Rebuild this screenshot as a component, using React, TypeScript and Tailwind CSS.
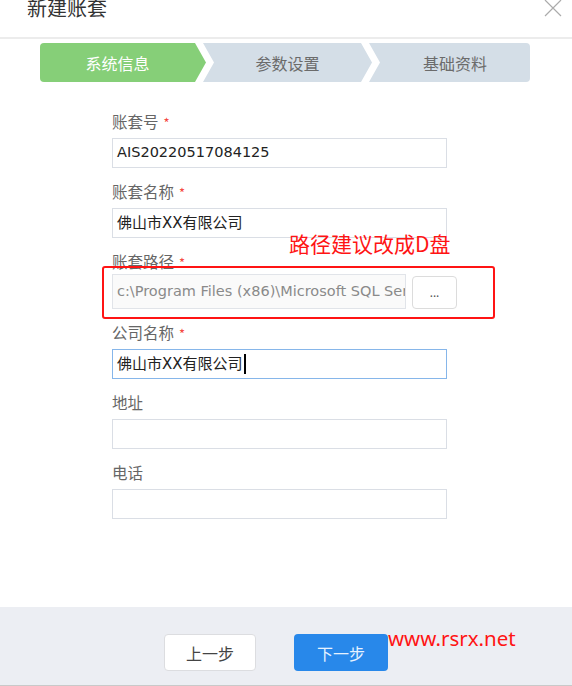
import React from "react";

const cjk = "font-['Noto_Sans_CJK_SC',sans-serif]";
const inputFont = "font-['DejaVu_Sans','Noto_Sans_CJK_SC',sans-serif]";

type FieldProps = {
  label: string;
  required?: boolean;
  children: React.ReactNode;
  gap?: string;
};

const Field: React.FC<FieldProps> = ({ label, required, children, gap = "mt-[7px]" }) => (
  <div className="mb-[13px]">
    <div className={`h-[20px] leading-[20px] text-[15.5px] text-[#666] ${cjk}`}>
      {label}
      {required && <span className="ml-[5px] text-[13px] text-[#f5473e]">*</span>}
    </div>
    <div className={gap}>{children}</div>
  </div>
);

const TextBox: React.FC<{ value?: string; focused?: boolean; big?: boolean }> = ({ value, focused, big }) => (
  <div
    className={`flex h-[30px] w-[335px] items-center border-[1.5px] bg-white px-[4px] text-[#222] ${inputFont} ${
      big ? "text-[15px]" : "text-[14.5px]"
    } ${focused ? "border-[#86b6ea]" : "border-[#dadee5]"}`}
  >
    {value}
    {focused && <span className="ml-[1px] inline-block h-[20px] w-[2px] bg-black" />}
  </div>
);

const steps = [
  { name: "系统信息", active: true },
  { name: "参数设置", active: false },
  { name: "基础资料", active: false },
];

export default function App() {
  return (
    <div className="relative flex h-[686px] w-[572px] flex-col overflow-hidden bg-white">
      {/* header */}
      <div className="flex h-[39px] items-start justify-between border-b-2 border-[#ececec] pl-[27px] pr-[10px]">
        <div className={`-mt-[2px] h-[20px] leading-[20px] text-[20px] text-[#333] ${cjk}`}>新建账套</div>
        <svg width="18" height="18" viewBox="0 0 18 18" className="-mt-[1px]">
          <path d="M1 1 L17 17 M17 1 L1 17" stroke="#ababab" strokeWidth="1.2" />
        </svg>
      </div>

      {/* steps */}
      <div className={`ml-[40px] mt-[4px] flex h-[39px] w-[490px] text-[16px] ${cjk}`}>
        <div className="flex w-[166px] items-center justify-center rounded-l-[4px] bg-[#86cf78] pr-[11px] text-white [clip-path:polygon(0_0,calc(100%-11px)_0,100%_50%,calc(100%-11px)_100%,0_100%)]">
          {steps[0].name}
        </div>
        <div className="-ml-[3px] flex w-[169px] items-center justify-center bg-[#d4dee7] text-[#6b6b6b] [clip-path:polygon(0_0,calc(100%-11px)_0,100%_50%,calc(100%-11px)_100%,0_100%,11px_50%)]">
          {steps[1].name}
        </div>
        <div className="-ml-[3px] flex flex-1 items-center justify-center rounded-r-[4px] bg-[#d4dee7] pl-[11px] text-[#6b6b6b] [clip-path:polygon(0_0,100%_0,100%_100%,0_100%,11px_50%)]">
          {steps[2].name}
        </div>
      </div>

      {/* form */}
      <div className="ml-[112px] mt-[29px] w-[345px]">
        <Field label="账套号" required>
          <TextBox value="AIS20220517084125" />
        </Field>
        <Field label="账套名称" required>
          <TextBox value="佛山市XX有限公司" big />
        </Field>
        <Field label="账套路径" required gap="mt-[3px]">
          <div className="flex items-end gap-[6px]">
            <div
              className={`h-[35px] w-[294px] overflow-hidden whitespace-nowrap border-[1.5px] border-[#e1e4e9] bg-[#fafafa] px-[4px] leading-[32px] text-[14.5px] text-[#8a8a8a] ${inputFont}`}
            >
              c:\Program Files (x86)\Microsoft SQL Server\MSSQL
            </div>
            <button className="h-[33px] w-[45px] rounded-[4px] border-[1.5px] border-[#dcdcdc] bg-white text-[12px] leading-[20px] text-[#555]">
              ...
            </button>
          </div>
        </Field>
        <Field label="公司名称" required>
          <TextBox value="佛山市XX有限公司" focused big />
        </Field>
        <Field label="地址">
          <TextBox />
        </Field>
        <Field label="电话">
          <TextBox />
        </Field>
      </div>

      <div className="flex-1" />

      {/* footer */}
      <div className={`flex h-[79px] gap-[38px] border-b border-[#c9c9c9] bg-[#eceef3] pl-[164px] pt-[27px] text-[16px] ${cjk}`}>
        <button className="h-[37px] w-[92px] rounded-[4px] border-[1.5px] border-[#dcdde0] bg-white text-[#444]">
          上一步
        </button>
        <button className="h-[37px] w-[94px] rounded-[4px] bg-[#2888ea] text-[#e6f2ff]">下一步</button>
      </div>

      {/* annotations */}
      <div className="absolute left-[102px] top-[266px] h-[53px] w-[393px] rounded-[3px] border-2 border-[#ff1414]" />
      <div className={`absolute left-[289px] top-[233px] leading-[21px] text-[21px] text-[#ff1414] ${cjk}`}>
        路径建议改成D盘
      </div>
      <div className="absolute left-[388px] top-[628px] font-['Noto_Sans',sans-serif] leading-[21px] text-[20.5px] text-[#ff1414]">
        www.rsrx.net
      </div>
    </div>
  );
}
